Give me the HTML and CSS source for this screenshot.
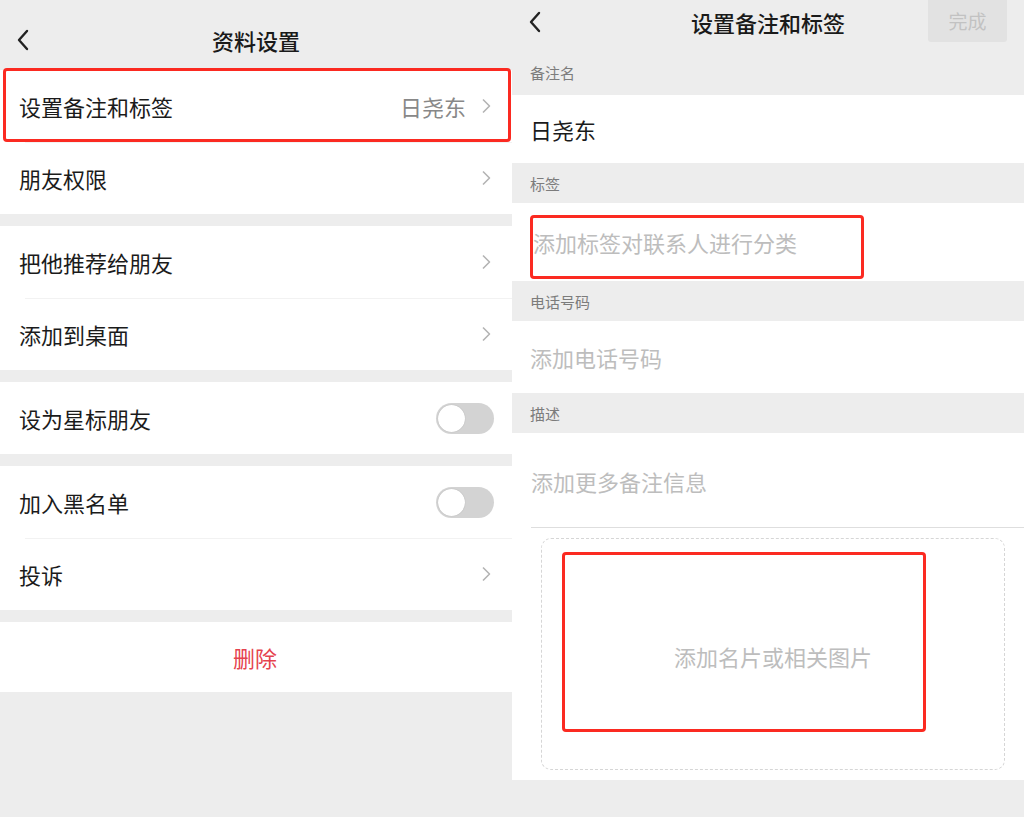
FILE: index.html
```html
<!DOCTYPE html>
<html lang="zh-CN">
<head>
    <meta charset="UTF-8">
    <title>资料设置</title>
    <link rel="stylesheet" href="styles.css">
</head>
<body>
    <div class="screens">
        <!-- 左：资料设置 -->
        <section class="phone">
            <header class="nav nav-tall">
                <span class="back">
                    <svg width="14" height="22" viewBox="0 0 14 22"><polyline points="11,2 3,11 11,20" fill="none" stroke="#222" stroke-width="2.4" stroke-linecap="round" stroke-linejoin="round"/></svg>
                </span>
                <h1 class="nav-title">资料设置</h1>
                <span></span>
            </header>

            <div class="group group-first">
                <div class="row">
                    <span class="row-label">设置备注和标签</span>
                    <span class="row-value">日尧东</span>
                    <svg class="chevron" width="10" height="16" viewBox="0 0 10 16"><polyline points="2,1.5 8.5,8 2,14.5" fill="none" stroke="#b4b4b4" stroke-width="1.6" stroke-linejoin="round"/></svg>
                    <span class="mark mark-row"></span>
                </div>
                <div class="row">
                    <span class="row-label">朋友权限</span>
                    <svg class="chevron" width="10" height="16" viewBox="0 0 10 16"><polyline points="2,1.5 8.5,8 2,14.5" fill="none" stroke="#b4b4b4" stroke-width="1.6" stroke-linejoin="round"/></svg>
                </div>
            </div>

            <div class="group">
                <div class="row">
                    <span class="row-label">把他推荐给朋友</span>
                    <svg class="chevron" width="10" height="16" viewBox="0 0 10 16"><polyline points="2,1.5 8.5,8 2,14.5" fill="none" stroke="#b4b4b4" stroke-width="1.6" stroke-linejoin="round"/></svg>
                </div>
                <div class="row">
                    <span class="row-label">添加到桌面</span>
                    <svg class="chevron" width="10" height="16" viewBox="0 0 10 16"><polyline points="2,1.5 8.5,8 2,14.5" fill="none" stroke="#b4b4b4" stroke-width="1.6" stroke-linejoin="round"/></svg>
                </div>
            </div>

            <div class="group">
                <div class="row">
                    <span class="row-label">设为星标朋友</span>
                    <span class="switch"><span class="knob"></span></span>
                </div>
            </div>

            <div class="group">
                <div class="row">
                    <span class="row-label">加入黑名单</span>
                    <span class="switch"><span class="knob"></span></span>
                </div>
                <div class="row">
                    <span class="row-label">投诉</span>
                    <svg class="chevron" width="10" height="16" viewBox="0 0 10 16"><polyline points="2,1.5 8.5,8 2,14.5" fill="none" stroke="#b4b4b4" stroke-width="1.6" stroke-linejoin="round"/></svg>
                </div>
            </div>

            <div class="group">
                <div class="row row-danger">删除</div>
            </div>
        </section>

        <!-- 右：设置备注和标签 -->
        <section class="phone">
            <header class="nav">
                <span class="back">
                    <svg width="14" height="22" viewBox="0 0 14 22"><polyline points="11,2 3,11 11,20" fill="none" stroke="#222" stroke-width="2.4" stroke-linecap="round" stroke-linejoin="round"/></svg>
                </span>
                <h1 class="nav-title">设置备注和标签</h1>
                <span class="done">完成</span>
            </header>

            <div class="caption caption-first">备注名</div>
            <div class="field field-name">日尧东</div>

            <div class="caption">标签</div>
            <div class="field field-tag placeholder">
                添加标签对联系人进行分类
                <span class="mark mark-tag"></span>
            </div>

            <div class="caption">电话号码</div>
            <div class="field field-phone placeholder">添加电话号码</div>

            <div class="caption">描述</div>
            <div class="desc">
                <div class="field field-desc placeholder">添加更多备注信息</div>
                <div class="photo-box">
                    <span class="placeholder">添加名片或相关图片</span>
                    <span class="mark mark-photo"></span>
                </div>
            </div>
        </section>
    </div>
</body>
</html>
```

FILE: styles.css
```css
* {
    box-sizing: border-box;
}
body {
    margin: 0;
    background: #ededed;
    font-family: "Noto Sans CJK SC", "Noto Sans", sans-serif;
    color: #1b1b1b;
}
.screens {
    display: flex;
    height: 817px;
}
.phone {
    width: 512px;
    background: #ededed;
}

/* 顶部导航 */
.nav {
    display: grid;
    grid-template-columns: 1fr auto 1fr;
    align-items: center;
    height: 44px;
}
.nav-tall {
    height: 68px;
    padding-top: 12px;
}
.back {
    display: flex;
    padding-left: 16px;
}
.nav-title {
    margin: 0;
    font-size: 22px;
    font-weight: 500;
    color: #1a1a1a;
}
.done {
    justify-self: end;
    align-self: start;
    width: 79px;
    height: 42px;
    margin-right: 17px;
    background: #e2e2e2;
    color: #c2c2c2;
    font-size: 19px;
    line-height: 42px;
    text-align: center;
    border-radius: 0 0 3px 3px;
}

/* 左侧列表 */
.group {
    background: #fff;
    margin-top: 12px;
}
.group-first {
    margin-top: 2px;
}
.row {
    position: relative;
    display: flex;
    align-items: center;
    height: 72px;
    padding: 0 21px 0 19px;
    font-size: 22px;
}
.row + .row::before {
    content: "";
    position: absolute;
    top: 0;
    left: 25px;
    right: 0;
    border-top: 1px solid #f2f2f2;
}
.row-label {
    flex: 1;
}
.row-value {
    color: #888;
    margin-right: 15px;
}
.chevron {
    display: block;
}
.row-danger {
    justify-content: center;
    height: 70px;
    color: #e5434e;
}
.switch {
    position: relative;
    width: 58px;
    height: 31px;
    margin-right: -3px;
    border-radius: 16px;
    background: #d3d3d3;
}
.knob {
    position: absolute;
    top: 2px;
    left: 2px;
    width: 27px;
    height: 27px;
    border-radius: 50%;
    background: #fff;
    box-shadow: 0 0 1px rgba(0, 0, 0, 0.25);
}

/* 右侧表单 */
.caption {
    padding: 12px 18px 10px;
    font-size: 15px;
    line-height: 18px;
    color: #7c7c7c;
}
.caption-first {
    padding-top: 20px;
    padding-bottom: 13px;
}
.field {
    position: relative;
    background: #fff;
    padding: 19px 18px;
    font-size: 22px;
    line-height: 30px;
}
.field-tag {
    padding: 24px 18px 24px 21px;
}
.field-phone {
    padding: 21px 18px;
}
.placeholder {
    color: #bdbdbd;
}
.desc {
    background: #fff;
    padding-bottom: 10px;
}
.field-desc {
    padding: 33px 18px 31px;
    margin-left: 19px;
    padding-left: 0;
    border-bottom: 1px solid #dedede;
}
.photo-box {
    position: relative;
    display: flex;
    align-items: center;
    justify-content: center;
    height: 232px;
    margin: 10px 19px 0 29px;
    border: 1.5px dashed #d6d6d6;
    border-radius: 10px;
    font-size: 22px;
    padding-top: 4px;
}

/* 红色标注框 */
.mark {
    position: absolute;
    border: 3px solid #fb2a21;
    border-radius: 4px;
    pointer-events: none;
}
.mark-row {
    top: -2px;
    left: 3px;
    right: 1px;
    bottom: 0;
}
.mark-tag {
    top: 12px;
    left: 18px;
    width: 334px;
    height: 64px;
}
.mark-photo {
    top: 13px;
    left: 20px;
    width: 364px;
    height: 180px;
}
```
